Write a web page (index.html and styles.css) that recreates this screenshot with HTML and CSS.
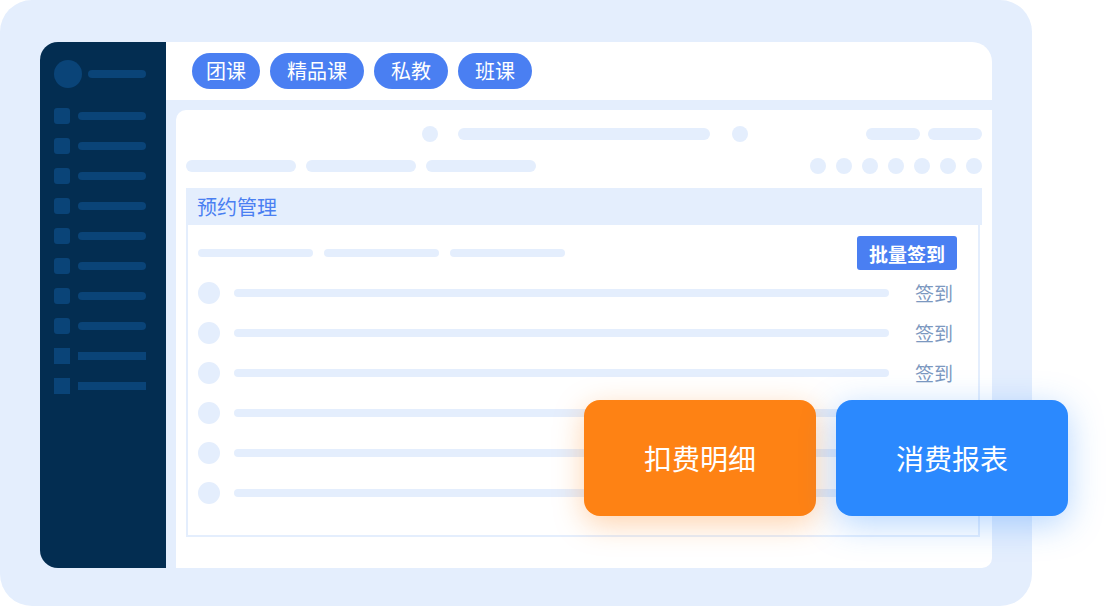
FILE: index.html
```html
<!DOCTYPE html>
<html lang="zh-CN">
<head>
    <meta charset="UTF-8">
    <meta name="viewport" content="width=device-width, initial-scale=1.0">
    <link rel="stylesheet" href="styles.css">
    <title>预约管理</title>
</head>
<body>
    <div class="frame">
        <div class="window">
            <div class="sidebar">
                <div class="user">
                    <div class="avatar"></div>
                    <div class="user-name"></div>
                </div>
                <div class="nav">
                    <div class="nav-item"><span class="nav-icon"></span><span class="nav-text"></span></div>
                    <div class="nav-item"><span class="nav-icon"></span><span class="nav-text"></span></div>
                    <div class="nav-item"><span class="nav-icon"></span><span class="nav-text"></span></div>
                    <div class="nav-item"><span class="nav-icon"></span><span class="nav-text"></span></div>
                    <div class="nav-item"><span class="nav-icon"></span><span class="nav-text"></span></div>
                    <div class="nav-item"><span class="nav-icon"></span><span class="nav-text"></span></div>
                    <div class="nav-item"><span class="nav-icon"></span><span class="nav-text"></span></div>
                    <div class="nav-item"><span class="nav-icon"></span><span class="nav-text"></span></div>
                    <div class="nav-item square"><span class="nav-icon"></span><span class="nav-text"></span></div>
                    <div class="nav-item square"><span class="nav-icon"></span><span class="nav-text"></span></div>
                </div>
            </div>

            <div class="main">
                <div class="tabs">
                    <span class="tab first">团课</span>
                    <span class="tab">精品课</span>
                    <span class="tab">私教</span>
                    <span class="tab">班课</span>
                </div>

                <div class="content">
                    <div class="toolbar">
                        <span class="dot"></span>
                        <span class="line search"></span>
                        <span class="dot"></span>
                        <div class="toolbar-right">
                            <span class="line short"></span>
                            <span class="line short"></span>
                        </div>
                    </div>

                    <div class="filters">
                        <span class="line filter"></span>
                        <span class="line filter"></span>
                        <span class="line filter"></span>
                        <div class="filters-right">
                            <span class="dot"></span>
                            <span class="dot"></span>
                            <span class="dot"></span>
                            <span class="dot"></span>
                            <span class="dot"></span>
                            <span class="dot"></span>
                            <span class="dot"></span>
                        </div>
                    </div>

                    <div class="section-title">预约管理</div>
                    <div class="panel">
                        <div class="panel-head">
                            <span class="bar"></span>
                            <span class="bar"></span>
                            <span class="bar"></span>
                            <button class="batch-btn">批量签到</button>
                        </div>
                        <div class="list">
                            <div class="list-row"><span class="avatar-sm"></span><span class="bar long"></span><span class="sign">签到</span></div>
                            <div class="list-row"><span class="avatar-sm"></span><span class="bar long"></span><span class="sign">签到</span></div>
                            <div class="list-row"><span class="avatar-sm"></span><span class="bar long"></span><span class="sign">签到</span></div>
                            <div class="list-row"><span class="avatar-sm"></span><span class="bar long"></span><span class="sign"></span></div>
                            <div class="list-row"><span class="avatar-sm"></span><span class="bar long"></span><span class="sign"></span></div>
                            <div class="list-row"><span class="avatar-sm"></span><span class="bar long"></span><span class="sign"></span></div>
                        </div>
                    </div>
                </div>
            </div>
        </div>

        <!-- floating action cards -->
        <div class="actions">
            <div class="action orange">扣费明细</div>
            <div class="action blue">消费报表</div>
        </div>
    </div>
</body>
</html>
```

FILE: styles.css
```css
* {
    box-sizing: border-box;
}

body {
    margin: 0;
    background: #fff;
    font-family: "Noto Sans CJK SC", "Noto Sans", sans-serif;
}

.frame {
    position: relative;
    width: 1032px;
    height: 606px;
    padding: 42px 40px 38px 40px;
    background: #e4eefd;
    border-radius: 32px;
}

.window {
    display: flex;
    height: 526px;
}

/* sidebar */
.sidebar {
    width: 126px;
    padding: 18px 0 0 14px;
    background: #032d51;
    border-radius: 18px 0 0 18px;
}

.user {
    display: flex;
    align-items: center;
    gap: 6px;
}

.avatar {
    width: 28px;
    height: 28px;
    border-radius: 50%;
    background: #0a4478;
}

.user-name {
    width: 58px;
    height: 8px;
    border-radius: 4px;
    background: #0a4478;
}

.nav {
    display: flex;
    flex-direction: column;
    gap: 14px;
    margin-top: 20px;
}

.nav-item {
    display: flex;
    align-items: center;
    gap: 8px;
    height: 16px;
}

.nav-icon {
    width: 16px;
    height: 16px;
    border-radius: 3px;
    background: #0a4478;
}

.nav-text {
    width: 68px;
    height: 8px;
    border-radius: 4px;
    background: #0a4478;
}

.nav-item.square .nav-icon,
.nav-item.square .nav-text {
    border-radius: 0;
}

/* main */
.main {
    flex: 1;
    display: flex;
    flex-direction: column;
}

.tabs {
    display: flex;
    align-items: center;
    gap: 10px;
    height: 58px;
    padding-left: 26px;
    background: #fff;
    border-top-right-radius: 20px;
}

.tab {
    height: 36px;
    line-height: 36px;
    padding: 0 17px;
    border-radius: 18px;
    background: #4a7ff2;
    color: #fff;
    font-size: 20px;
}

.tab.first {
    padding: 0 14px;
}

.content {
    flex: 1;
    margin: 10px 0 0 10px;
    padding: 16px 10px 0 10px;
    background: #fff;
    border-radius: 10px 0 10px 0;
}

.dot {
    width: 16px;
    height: 16px;
    border-radius: 50%;
    background: #e4eefd;
}

.line {
    height: 12px;
    border-radius: 6px;
    background: #e4eefd;
}

.toolbar {
    display: flex;
    align-items: center;
    height: 16px;
    padding-left: 236px;
}

.toolbar .search {
    width: 252px;
    margin: 0 22px 0 20px;
}

.toolbar-right {
    display: flex;
    gap: 8px;
    margin-left: auto;
}

.line.short {
    width: 54px;
}

.filters {
    display: flex;
    align-items: center;
    gap: 10px;
    height: 16px;
    margin-top: 16px;
}

.line.filter {
    width: 110px;
}

.filters-right {
    display: flex;
    gap: 10px;
    margin-left: auto;
}

.section-title {
    height: 37px;
    line-height: 37px;
    margin-top: 14px;
    padding-left: 11px;
    background: #e4eefd;
    color: #4a7ff2;
    font-size: 20px;
}

.panel {
    height: 312px;
    margin-right: 2px;
    padding-top: 11px;
    border: 2px solid #e4eefd;
    border-top: 0;
}

.panel-head {
    display: flex;
    align-items: center;
    gap: 11px;
    height: 34px;
    padding: 0 21px 0 10px;
}

.bar {
    width: 115px;
    height: 8px;
    border-radius: 4px;
    background: #e4eefd;
}

.batch-btn {
    margin-left: auto;
    height: 34px;
    padding: 0 12px;
    border: 0;
    border-radius: 3px;
    background: #4a7ff2;
    color: #fff;
    font-family: inherit;
    font-size: 19px;
    font-weight: bold;
}

.list {
    display: flex;
    flex-direction: column;
    gap: 18px;
    margin-top: 12px;
    padding: 0 25px 0 10px;
}

.list-row {
    display: flex;
    align-items: center;
    height: 22px;
}

.avatar-sm {
    width: 22px;
    height: 22px;
    border-radius: 50%;
    background: #e4eefd;
}

.bar.long {
    flex: 1;
    margin: 0 26px 0 14px;
}

.sign {
    width: 38px;
    color: #7c98c0;
    font-size: 19px;
    line-height: 22px;
}

/* floating cards */
.actions {
    position: absolute;
    left: 584px;
    top: 400px;
    display: flex;
    gap: 20px;
}

.action {
    display: flex;
    align-items: center;
    justify-content: center;
    width: 232px;
    height: 116px;
    border-radius: 16px;
    color: #fff;
    font-size: 28px;
}

.action.orange {
    background: #fe8214;
    box-shadow: 0 8px 30px rgba(254, 130, 20, 0.35);
}

.action.blue {
    background: #2b89fe;
    box-shadow: 0 8px 34px rgba(43, 137, 254, 0.35);
}
```
